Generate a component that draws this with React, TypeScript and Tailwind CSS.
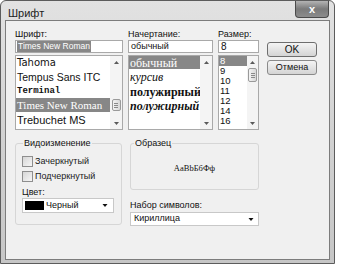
import React from 'react';

const UpArrow = () => (
  <svg width="5" height="3" viewBox="0 0 5 3">
    <path d="M0 3 L2.5 0 L5 3 Z" fill="#5a5a5a" />
  </svg>
);

const DownArrow = ({ color = '#5a5a5a', w = 5, h = 3 }: { color?: string; w?: number; h?: number }) => (
  <svg width={w} height={h} viewBox="0 0 5 3">
    <path d="M0 0 L5 0 L2.5 3 Z" fill={color} />
  </svg>
);

const Thumb = ({ className }: { className: string }) => (
  <div
    className={`mx-auto w-[9px] rounded-[2px] border border-[#9a9a9a] bg-linear-to-r from-[#f4f4f4] to-[#d8d8d8] flex flex-col items-center justify-center gap-[1px] ${className}`}
  >
    <div className="h-px w-[4px] bg-[#8a8a8a]" />
    <div className="h-px w-[4px] bg-[#8a8a8a]" />
    <div className="h-px w-[4px] bg-[#8a8a8a]" />
  </div>
);

const Checkbox = ({ label }: { label: string }) => (
  <div className="flex h-[11px] items-center gap-[2px]">
    <div className="h-[11px] w-[11px] border border-[#8e8e8e] bg-linear-to-br from-[#d6d6d6] to-[#f6f6f6]" />
    <span className="text-[9px] leading-[11px] text-[#1a1a1a]">{label}</span>
  </div>
);

const fonts = [
  { name: 'Tahoma', cls: "h-[14px] font-['DejaVu_Sans'] text-[10px]" },
  { name: 'Tempus Sans ITC', cls: "h-[14px] font-['Liberation_Sans'] text-[10.5px]" },
  { name: 'Terminal', cls: "h-[14px] font-['Liberation_Mono'] font-bold text-[9px]" },
  { name: 'Times New Roman', cls: "h-[14px] font-['Liberation_Serif'] text-[11px] bg-[#878787] text-white" },
  { name: 'Trebuchet MS', cls: "h-[16px] font-['Liberation_Sans'] text-[11px]" },
];

const styles = [
  { name: 'обычный', cls: 'h-[13px] bg-[#878787] text-white' },
  { name: 'курсив', cls: 'h-[16px] italic' },
  { name: 'полужирный', cls: 'h-[14px] font-bold' },
  { name: 'полужирный курсив', cls: 'h-[14px] font-bold italic' },
];

const sizes = ['8', '9', '10', '11', '12', '14', '16'];

export default function App() {
  return (
    <div className="h-[265px] w-[338px] overflow-hidden bg-white font-['Liberation_Sans','Noto_Sans',sans-serif] text-[#111]">
      <div className="flex h-[264px] w-[335px] flex-col rounded-t-[6px] border border-[#5c5c5c] bg-linear-to-b from-[#e2e2e2] via-[#d2d2d2] to-[#c6c6c6]">
        {/* title bar */}
        <div className="flex h-[19px] items-start justify-between pl-[7px] pr-[5px]">
          <span className="pt-[6px] text-[11px] leading-[12px] text-[#1c1c1c]">Шрифт</span>
          <div className="flex h-[17px] w-[34px] items-center justify-center rounded-b-[4px] border border-t-0 border-[#4a4a4a] bg-linear-to-b from-[#b4b4b4] via-[#7a7a7a] to-[#8c8c8c]">
            <span className="text-[11px] font-bold leading-none text-white">x</span>
          </div>
        </div>

        {/* client */}
        <div className="ml-[4px] h-[240px] w-[325px] border border-[#7c7c7c] bg-[#f0f0f0] pl-[9px] pt-[7px]">
          <div className="flex">
            {/* font column */}
            <div className="w-[108px]">
              <div className="h-[12px] text-[9px] leading-[12px]">Шрифт:</div>
              <div className="flex h-[13px] items-center border border-[#a9a9a9] bg-white pl-px">
                <span className="bg-[#878787] px-px text-[8.5px] leading-[11px] text-white">Times New Roman</span>
              </div>
              <div className="mt-[2px] flex h-[75px] border border-[#a9a9a9] bg-white">
                <div className="flex-1 overflow-hidden">
                  {fonts.map((f) => (
                    <div key={f.name} className={`flex items-center whitespace-nowrap pl-px leading-none ${f.cls}`}>
                      {f.name}
                    </div>
                  ))}
                </div>
                <div className="flex w-[12px] flex-col bg-[#f4f4f4]">
                  <div className="flex h-[12px] items-center justify-center"><UpArrow /></div>
                  <Thumb className="mt-[31px] h-[12px]" />
                  <div className="flex-1" />
                  <div className="flex h-[12px] items-center justify-center"><DownArrow /></div>
                </div>
              </div>
            </div>

            {/* style column */}
            <div className="ml-[5px] w-[85px]">
              <div className="h-[12px] text-[9px] leading-[12px]">Начертание:</div>
              <div className="flex h-[13px] items-center border border-[#a9a9a9] bg-white pl-[2px] text-[9px]">обычный</div>
              <div className="mt-[2px] flex h-[75px] border border-[#a9a9a9] bg-white">
                <div className="flex-1 overflow-hidden font-['Liberation_Serif'] text-[12px]">
                  {styles.map((s) => (
                    <div key={s.name} className={`flex items-center whitespace-nowrap pl-px leading-none ${s.cls}`}>
                      {s.name}
                    </div>
                  ))}
                </div>
                <div className="flex w-[12px] flex-col bg-[#f4f4f4]">
                  <div className="flex h-[12px] items-center justify-center"><UpArrow /></div>
                  <div className="flex-1" />
                  <div className="flex h-[12px] items-center justify-center"><DownArrow /></div>
                </div>
              </div>
            </div>

            {/* size column */}
            <div className="ml-[5px] w-[41px]">
              <div className="h-[12px] text-[9px] leading-[12px]">Размер:</div>
              <div className="flex h-[13px] items-center border border-[#a9a9a9] bg-white pl-[2px] text-[10px]">8</div>
              <div className="mt-[2px] flex h-[75px] border border-[#a9a9a9] bg-white">
                <div className="flex-1 overflow-hidden text-[9.5px]">
                  {sizes.map((s, i) => (
                    <div
                      key={s}
                      className={`flex h-[10px] items-center pl-px leading-[10px] ${i === 0 ? 'bg-[#878787] text-white' : ''}`}
                    >
                      {s}
                    </div>
                  ))}
                </div>
                <div className="flex w-[11px] flex-col bg-[#f4f4f4]">
                  <div className="flex h-[12px] items-center justify-center"><UpArrow /></div>
                  <Thumb className="h-[14px]" />
                  <div className="flex-1" />
                  <div className="flex h-[12px] items-center justify-center"><DownArrow /></div>
                </div>
              </div>
            </div>

            {/* buttons */}
            <div className="ml-[8px] mt-[14px] flex w-[50px] flex-col gap-[3px]">
              <div className="flex h-[15px] items-center justify-center rounded-[3px] border border-[#6e6e6e] bg-linear-to-b from-[#f4f4f4] to-[#d4d4d4] text-[10px] leading-none">
                OK
              </div>
              <div className="flex h-[15px] items-center justify-center rounded-[3px] border border-[#8a8a8a] bg-linear-to-b from-[#f4f4f4] to-[#d4d4d4] text-[9px] leading-none">
                Отмена
              </div>
            </div>
          </div>

          {/* lower part */}
          <div className="mt-[7px] flex">
            <fieldset className="h-[88px] w-[107px] rounded-[3px] border border-[#d6d6d6] pl-[6px]">
              <legend className="ml-px px-px text-[9px] leading-[12px]">Видоизменение</legend>
              <div className="mt-[7px] flex flex-col gap-[4px]">
                <Checkbox label="Зачеркнутый" />
                <Checkbox label="Подчеркнутый" />
              </div>
              <div className="mt-[4px] h-[12px] text-[9px] leading-[12px]">Цвет:</div>
              <div className="flex h-[15px] w-[92px] items-center border border-[#c8c8c8] bg-white pl-[2px] pr-[5px]">
                <div className="h-[9px] w-[19px] bg-black" />
                <span className="ml-[2px] flex-1 text-[9px]">Черный</span>
                <DownArrow color="#111" w={6} h={3} />
              </div>
            </fieldset>

            <div className="ml-[8px] w-[129px]">
              <fieldset className="h-[53px] rounded-[3px] border border-[#d6d6d6]">
                <legend className="ml-[3px] px-px text-[9px] leading-[12px]">Образец</legend>
                <div className="flex h-[39px] items-center justify-center font-['Liberation_Serif'] text-[8.5px]">
                  AaBbБбФф
                </div>
              </fieldset>
              <div className="mt-[9px] h-[12px] text-[9px] leading-[12px]">Набор символов:</div>
              <div className="mt-px flex h-[14px] items-center border border-[#c8c8c8] bg-white pl-[3px] pr-[4px]">
                <span className="flex-1 text-[9px]">Кириллица</span>
                <DownArrow color="#111" w={6} h={3} />
              </div>
            </div>
          </div>
        </div>
      </div>
    </div>
  );
}
